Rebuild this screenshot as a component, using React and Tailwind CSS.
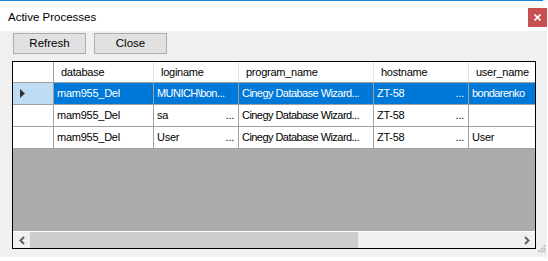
import React from "react"

const COLS = [
	{ key: "database", w: "w-[100px]" },
	{ key: "loginame", w: "w-[85px]" },
	{ key: "program_name", w: "w-[135px]" },
	{ key: "hostname", w: "w-[95px]" },
	{ key: "user_name", w: "w-[66px]" },
]

const ROWS = [
	{ selected: true, cells: [["mam955_Del"], ["MUNICH\\bon..."], ["Cinegy Database Wizard..."], ["ZT-58", "..."], ["bondarenko"]] },
	{ selected: false, cells: [["mam955_Del"], ["sa", "..."], ["Cinegy Database Wizard..."], ["ZT-58", "..."], [""]] },
	{ selected: false, cells: [["mam955_Del"], ["User", "..."], ["Cinegy Database Wizard..."], ["ZT-58", "..."], ["User"]] },
]

const isLong = (t) => t.length > 9 && t !== "mam955_Del"

function Grip() {
	const dots = [[4, 0], [4, 2], [2, 2], [4, 4], [2, 4], [0, 4]]
	return (
		<svg width="8" height="8" viewBox="0 0 6 6" className="absolute right-[1px] bottom-[4px]">
			{dots.map(([x, y], i) => (
				<rect key={i} x={x} y={y} width="1.5" height="1.5" fill="#bcbcbc" />
			))}
		</svg>
	)
}

export default function App() {
	return (
		<div className="w-[548px] h-[261px] bg-white relative" style={{ fontFamily: '"Liberation Sans", Arial, sans-serif' }}>
			<div className="w-[547px] h-[257px] bg-[#f0f0f0] rounded-bl-[4px] flex flex-col relative text-[11px] text-black">
				<div className="h-px w-[543px] bg-[#1883d7]" />

				{/* title bar */}
				<div className="h-[30px] bg-white flex items-start justify-between">
					<span className="pl-[8px] pt-[10px] text-[11.5px] leading-[12px]">Active Processes</span>
					<div className="mt-[7px] w-[19px] h-[19px] bg-[#c75050] flex items-center justify-center">
						<svg width="7" height="7" viewBox="0 0 7 7">
							<path d="M0.5 0.5 L6.5 6.5 M6.5 0.5 L0.5 6.5" stroke="white" strokeWidth="1.6" />
						</svg>
					</div>
				</div>

				{/* toolbar */}
				<div className="flex gap-[8px] pl-[13px] pt-[2px]">
					<button className="w-[73px] h-[21px] bg-[#e1e1e1] border border-[#adadad] text-[11.5px] leading-none">Refresh</button>
					<button className="w-[73px] h-[21px] bg-[#e1e1e1] border border-[#adadad] text-[11.5px] leading-none">Close</button>
				</div>

				{/* grid */}
				<div className="ml-[12px] mt-[7px] w-[524px] h-[188px] border border-black flex flex-col bg-[#ababab] overflow-hidden tracking-[-0.25px]">
					<div className="flex h-[21px] bg-white border-b border-[#a0a0a0] shrink-0">
						<div className="w-[41px] border-r border-[#a0a0a0]" />
						{COLS.map((c, i) => (
							<div key={c.key} className={`${c.w} ${i < COLS.length - 1 ? "border-r border-[#e5e5e5]" : ""} pl-[7px] flex items-center`}>
								{c.key}
							</div>
						))}
					</div>

					{ROWS.map((r, ri) => (
						<div key={ri} className="flex h-[22px] border-b border-[#a0a0a0] shrink-0">
							<div className={`w-[41px] border-r border-[#a0a0a0] flex items-center pl-[7px] ${r.selected ? "bg-[#bfdcf2]" : "bg-white"}`}>
								{r.selected && (
									<svg width="5" height="9" viewBox="0 0 5 9">
										<path d="M0 0 L5 4.5 L0 9 Z" fill="#333" />
									</svg>
								)}
							</div>
							{COLS.map((c, i) => (
								<div
									key={c.key}
									className={`${c.w} ${i < COLS.length - 1 ? "border-r border-[#a0a0a0]" : ""} px-[3px] flex items-center justify-between whitespace-nowrap overflow-hidden ${r.selected ? "bg-[#0078d7] text-white" : "bg-white"}`}>
									<span className={isLong(r.cells[i][0]) ? "tracking-[-0.55px]" : ""}>{r.cells[i][0]}</span>
									{r.cells[i][1] && <span className="pr-[1px]">{r.cells[i][1]}</span>}
								</div>
							))}
						</div>
					))}

					<div className="flex-1" />

					{/* horizontal scrollbar */}
					<div className="h-[17px] shrink-0 border-t border-white bg-[#f0f0f0] flex items-center">
						<div className="w-[17px] h-full flex items-center justify-center">
							<svg width="6" height="9" viewBox="0 0 6 9">
								<path d="M5 1 L1.5 4.5 L5 8" stroke="#606060" strokeWidth="2" fill="none" />
							</svg>
						</div>
						<div className="w-[328px] h-full bg-[#cdcdcd]" />
						<div className="flex-1" />
						<div className="w-[17px] h-full flex items-center justify-center">
							<svg width="6" height="9" viewBox="0 0 6 9">
								<path d="M1 1 L4.5 4.5 L1 8" stroke="#606060" strokeWidth="2" fill="none" />
							</svg>
						</div>
					</div>
				</div>

				<Grip />
			</div>
		</div>
	)
}
